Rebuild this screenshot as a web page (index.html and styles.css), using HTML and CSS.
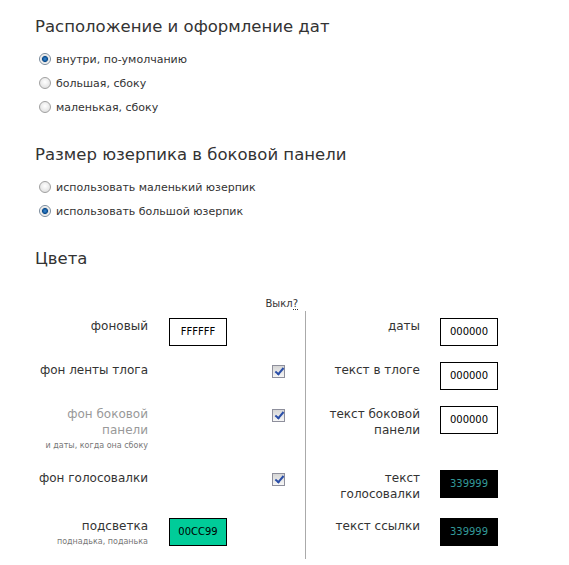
FILE: index.html
```html
<!DOCTYPE html>
<html lang="ru">
<head>
    <meta charset="UTF-8">
    <meta name="viewport" content="width=device-width, initial-scale=1.0">
    <title>Оформление тлога</title>
    <link rel="stylesheet" href="styles.css">
</head>
<body>

    <div class="page">
        <h2>Расположение и оформление дат</h2>
        <ul class="options">
            <li><label><input type="radio" name="dates" checked>внутри, по-умолчанию</label></li>
            <li><label><input type="radio" name="dates">большая, сбоку</label></li>
            <li><label><input type="radio" name="dates">маленькая, сбоку</label></li>
        </ul>

        <h2>Размер юзерпика в боковой панели</h2>
        <ul class="options">
            <li><label><input type="radio" name="userpic">использовать маленький юзерпик</label></li>
            <li><label><input type="radio" name="userpic" checked>использовать большой юзерпик</label></li>
        </ul>

        <h2>Цвета</h2>
        <div class="off-head">Выкл<span class="hint">?</span></div>
        <div class="colors">
            <div class="divider"></div>

            <div class="name">фоновый</div>
            <div class="cell"><div class="swatch">FFFFFF</div></div>
            <div class="cell"></div>
            <div class="name right">даты</div>
            <div class="cell"><div class="swatch">000000</div></div>

            <div class="name">фон ленты тлога</div>
            <div class="cell"></div>
            <div class="cell off"><input type="checkbox" checked></div>
            <div class="name right">текст в тлоге</div>
            <div class="cell"><div class="swatch">000000</div></div>

            <div class="name muted">фон боковой панели<small>и даты, когда она сбоку</small></div>
            <div class="cell"></div>
            <div class="cell off"><input type="checkbox" checked></div>
            <div class="name right">текст боковой панели</div>
            <div class="cell"><div class="swatch">000000</div></div>

            <div class="name">фон голосовалки</div>
            <div class="cell"></div>
            <div class="cell off"><input type="checkbox" checked></div>
            <div class="name right">текст голосовалки</div>
            <div class="cell"><div class="swatch dark">339999</div></div>

            <div class="name">подсветка<small>поднадька, поданька</small></div>
            <div class="cell"><div class="swatch mint">00CC99</div></div>
            <div class="cell"></div>
            <div class="name right">текст ссылки</div>
            <div class="cell"><div class="swatch dark">339999</div></div>
        </div>
    </div>

</body>
</html>
```

FILE: styles.css
```css
body { margin: 0; background: #fff; color: #333; font-family: "DejaVu Sans", Verdana, sans-serif; }
.page { padding: 17px 0 0 35px; }
h2 { margin: 0 0 10px; font-size: 16.5px; font-weight: normal; line-height: 20px; color: #333; }

.options { list-style: none; margin: 0 0 26px; padding: 0 0 0 4px; font-size: 11px; }
.options li { height: 24px; display: flex; align-items: center; }
.options label { display: flex; align-items: center; }
.options input { appearance: none; width: 12px; height: 12px; margin: 0 5px 0 0; border: 1px solid #a0a0a0; border-radius: 50%; background: radial-gradient(circle at 50% 40%, #fff, #d8d8d8); }
.options input:checked { background: radial-gradient(circle, #3a8ad6 0, #0b4c8c 2.6px, #dcdcdc 3.4px, #fff 5px); border-color: #7a8a9a; }

.off-head { width: 263px; padding: 18px 7px 0 0; text-align: right; font-size: 10px; line-height: 14px; color: #333; }
.hint { border-bottom: 1px dotted #333; }

.colors { display: grid; grid-template-columns: 134px 58px 78px 1px 134px 58px; font-size: 12px; line-height: 16px; }
.colors > .name, .colors > .cell { padding: 7px 0 9px; }
.divider { grid-column: 4; grid-row: 1 / span 5; background: #aaa; }
.colors > .name { padding-right: 21px; text-align: right; }
.colors > .name.right { padding-right: 20px; }
.name small { display: block; font-size: 8px; color: #777; }
.muted { color: #999; }

.swatch { box-sizing: border-box; width: 58px; height: 28px; border: 1px solid #000; font-size: 10px; line-height: 26px; text-align: center; color: #000; background: #fff; }
.swatch.dark { background: #000; color: #339999; }
.swatch.mint { background: #00cc99; }

.colors > .off { display: flex; justify-content: flex-end; padding-right: 20px; }
.off input { appearance: none; position: relative; width: 13px; height: 13px; margin: 3px 0 0; border: 1px solid #8e8f9c; background: linear-gradient(#d6d6d6, #f6f6f6); }
.off input:checked::after { content: ""; position: absolute; left: 4px; top: 0; width: 3px; height: 7px; border: solid #2a4ea8; border-width: 0 2px 2px 0; transform: rotate(40deg); }
```
